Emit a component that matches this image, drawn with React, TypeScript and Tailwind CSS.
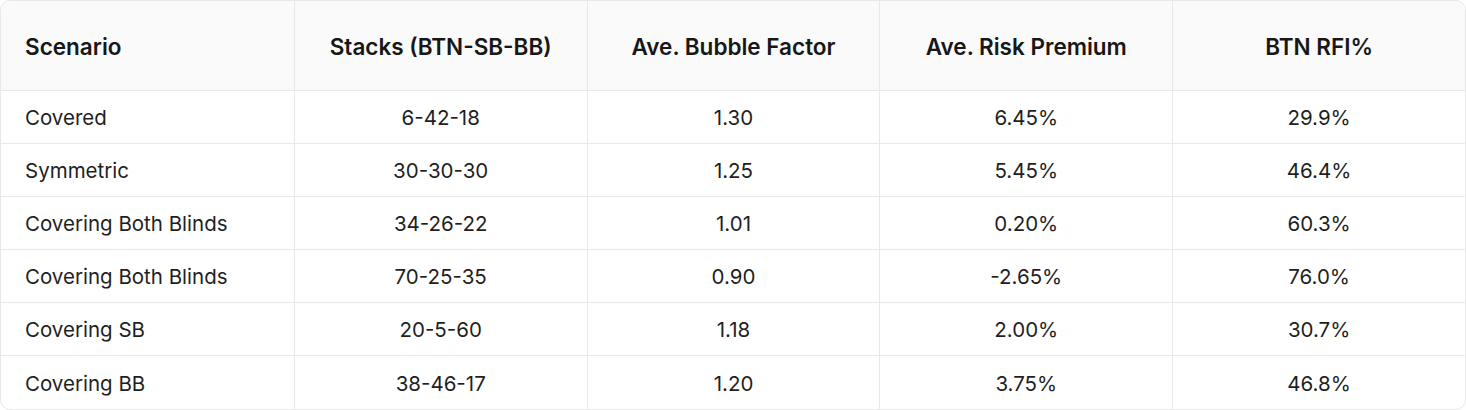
type Row = {
  scenario: string;
  stacks: string;
  bubble: string;
  risk: string;
  rfi: string;
};

const headers = [
  "Scenario",
  "Stacks (BTN-SB-BB)",
  "Ave. Bubble Factor",
  "Ave. Risk Premium",
  "BTN RFI%",
];

const rows: Row[] = [
  { scenario: "Covered", stacks: "6-42-18", bubble: "1.30", risk: "6.45%", rfi: "29.9%" },
  { scenario: "Symmetric", stacks: "30-30-30", bubble: "1.25", risk: "5.45%", rfi: "46.4%" },
  { scenario: "Covering Both Blinds", stacks: "34-26-22", bubble: "1.01", risk: "0.20%", rfi: "60.3%" },
  { scenario: "Covering Both Blinds", stacks: "70-25-35", bubble: "0.90", risk: "-2.65%", rfi: "76.0%" },
  { scenario: "Covering SB", stacks: "20-5-60", bubble: "1.18", risk: "2.00%", rfi: "30.7%" },
  { scenario: "Covering BB", stacks: "38-46-17", bubble: "1.20", risk: "3.75%", rfi: "46.8%" },
];

export default function App() {
  return (
    <div className="bg-white" style={{ fontFamily: "Inter, 'Noto Sans', sans-serif" }}>
      <div className="border border-[#e8e8e8] rounded-[10px] overflow-hidden">
        {/* Header */}
        <div className="grid grid-cols-5 bg-[#fafafa] border-b border-[#e8e8e8] h-[90px]">
          {headers.map((h, i) => (
            <div
              key={h}
              className={`flex items-center pt-[2px] text-[22.5px] font-semibold text-[#171717] ${
                i === 0 ? "pl-6" : "justify-center border-l border-[#e8e8e8]"
              }`}
            >
              {h}
            </div>
          ))}
        </div>

        {/* Body */}
        {rows.map((r, idx) => {
          const cells = [r.scenario, r.stacks, r.bubble, r.risk, r.rfi];
          return (
            <div
              key={idx}
              className={`grid grid-cols-5 h-[53px] ${
                idx < rows.length - 1 ? "border-b border-[#e8e8e8]" : ""
              }`}
            >
              {cells.map((c, i) => (
                <div
                  key={i}
                  className={`flex items-center pt-[3px] text-[20.5px] text-[#1f1f1f] ${
                    i === 0 ? "pl-6" : "justify-center border-l border-[#e8e8e8]"
                  }`}
                >
                  {c}
                </div>
              ))}
            </div>
          );
        })}
      </div>
    </div>
  );
}
